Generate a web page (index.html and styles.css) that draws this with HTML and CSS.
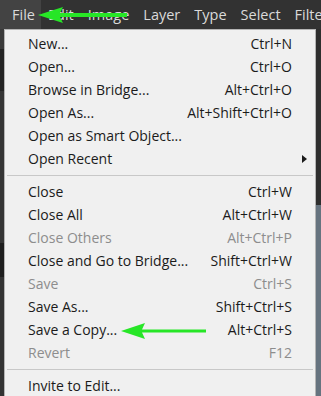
FILE: index.html
```html
<!DOCTYPE html>
<html lang="en">
<head>
    <meta charset="UTF-8">
    <title>File menu</title>
    <link rel="stylesheet" href="styles.css">
</head>
<body>
    <div class="menubar">
        <span class="bar-item open">File</span>
        <span class="bar-item">Edit</span>
        <span class="bar-item">Image</span>
        <span class="bar-item">Layer</span>
        <span class="bar-item">Type</span>
        <span class="bar-item">Select</span>
        <span class="bar-item">Filter</span>
    </div>

    <div class="workspace">
        <div class="side-left"></div>
        <div class="menu">
            <div class="item"><span>New...</span><span class="key">Ctrl+N</span></div>
            <div class="item"><span>Open...</span><span class="key">Ctrl+O</span></div>
            <div class="item"><span>Browse in Bridge...</span><span class="key">Alt+Ctrl+O</span></div>
            <div class="item"><span>Open As...</span><span class="key">Alt+Shift+Ctrl+O</span></div>
            <div class="item"><span>Open as Smart Object...</span><span class="key"></span></div>
            <div class="item"><span>Open Recent</span><span class="key"></span><span class="sub"></span></div>
            <div class="sep"></div>
            <div class="item"><span>Close</span><span class="key">Ctrl+W</span></div>
            <div class="item"><span>Close All</span><span class="key">Alt+Ctrl+W</span></div>
            <div class="item off"><span>Close Others</span><span class="key">Alt+Ctrl+P</span></div>
            <div class="item"><span>Close and Go to Bridge...</span><span class="key">Shift+Ctrl+W</span></div>
            <div class="item off"><span>Save</span><span class="key">Ctrl+S</span></div>
            <div class="item"><span>Save As...</span><span class="key">Shift+Ctrl+S</span></div>
            <div class="item"><span>Save a Copy...</span><span class="key">Alt+Ctrl+S</span></div>
            <div class="item off"><span>Revert</span><span class="key">F12</span></div>
            <div class="sep"></div>
            <div class="item"><span>Invite to Edit...</span><span class="key"></span></div>
        </div>
        <div class="side-right"></div>
    </div>

    <!-- annotation arrows -->
    <svg class="arrow arrow-file" width="90" height="18" viewBox="0 0 90 18">
        <polygon points="0,8 25,0 22,6 89,6 89,10 22,10 25,16" />
    </svg>
    <svg class="arrow arrow-copy" width="86" height="18" viewBox="0 0 86 18">
        <polygon points="0,8 24,0 21,6.5 85,6.5 85,9.5 21,9.5 24,16" />
    </svg>
</body>
</html>
```

FILE: styles.css
```css
* {
    box-sizing: border-box;
}

body {
    margin: 0;
    width: 321px;
    height: 396px;
    overflow: hidden;
    background: #2b2b2b;
    font-family: 'Open Sans', 'Noto Sans', sans-serif;
    font-size: 14px;
}

.menubar {
    display: flex;
    height: 29px;
    overflow: hidden;
    background: #323232;
    color: #dadada;
    font-size: 14.5px;
    white-space: nowrap;
}

.bar-item {
    flex-shrink: 0;
    padding: 0 7px;
    line-height: 29px;
}

.bar-item.open {
    width: 41px;
    padding: 0 0 0 12px;
    background: #434343;
}

.workspace {
    display: flex;
    height: 367px;
}

.side-left {
    width: 4px;
    background: linear-gradient(#3a3a3a 0 20px, #232323 20px 62px, #353535 62px 214px, #1e1e1e 214px 248px, #333 248px);
}

.menu {
    width: 312px;
    background: #f0f0f0;
    border: 1px solid #b4b4b4;
    border-bottom: none;
    padding-top: 2px;
    color: #1b1b1b;
}

.side-right {
    flex: 1;
    background: linear-gradient(#2e2e2e 0 176px, #66737f 176px);
}

.item {
    display: grid;
    grid-template-columns: 1fr auto 23px;
    height: 23px;
    line-height: 23px;
    padding-left: 23px;
    white-space: nowrap;
}

.item.off {
    color: #8d8d8d;
}

.sub {
    align-self: center;
    width: 0;
    height: 0;
    margin-left: 10px;
    border-top: 4.5px solid transparent;
    border-bottom: 4.5px solid transparent;
    border-left: 5px solid #1b1b1b;
}

.sep {
    height: 1px;
    margin: 4.5px 2px;
    background: #c8c8c8;
}

.arrow {
    position: absolute;
}

.arrow polygon {
    fill: #27e627;
}

.arrow-file {
    left: 38px;
    top: 7px;
}

.arrow-copy {
    left: 121px;
    top: 323px;
}
```
